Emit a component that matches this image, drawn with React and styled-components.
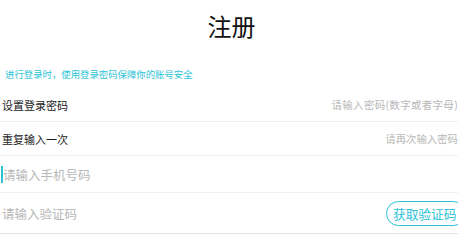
import React from 'react';
import styled, { createGlobalStyle } from 'styled-components';

const GlobalStyle = createGlobalStyle`
html, body {
margin: 0;
padding: 0;
overflow: hidden;
background: #ffffff;
}

body {
font-family: "Noto Sans CJK SC", "Noto Sans", sans-serif;
}
`

const cyan = '#2cc3d6';

const Page = styled.div`
width: 458px;
display: flex;
flex-direction: column;
`

const Title = styled.h1`
margin: 0;
height: 52px;
line-height: 52px;
padding-left: 5px;
text-align: center;
font-size: 24px;
font-weight: 400;
color: #111;
`

const Hint = styled.p`
margin: 15px 0 7px 5px;
line-height: 14px;
font-size: 9.4px;
color: ${cyan};
`

const Row = styled.div`
box-sizing: border-box;
height: ${(p) => p.height}px;
display: flex;
align-items: center;
padding-left: 2px;
border-bottom: 1px solid ${(p) => (p.last ? '#e4e4e4' : '#f1f1f1')};
`

const Label = styled.span`
flex-shrink: 0;
font-size: 11px;
color: #1a1a1a;
`

const Field = styled.input`
flex: 1;
min-width: 0;
border: none;
outline: none;
padding: 0;
background: transparent;
font-family: inherit;
font-size: ${(p) => p.size || 12.5}px;
letter-spacing: ${(p) => p.spacing || 0}px;
text-align: ${(p) => (p.right ? 'right' : 'left')};
color: #333;

&::placeholder {
color: #b8b8b8;
}
`

const Caret = styled.span`
flex-shrink: 0;
width: 2px;
height: 17px;
margin-left: -1px;
background: ${cyan};
`

const CodeButton = styled.button`
flex-shrink: 0;
box-sizing: border-box;
width: 80px;
height: 25px;
margin-right: -8px;
padding: 0 0 0 6px;
text-align: left;
border: 1px solid ${cyan};
border-radius: 13px;
background: #fff;
font-family: inherit;
font-size: 12.7px;
color: ${cyan};
`

export default function App() {
	return (
		<Page>
			<GlobalStyle />
			<Title>注册</Title>
			<Hint>进行登录时，使用登录密码保障你的账号安全</Hint>

			<Row height={34}>
				<Label>设置登录密码</Label>
				<Field right size={10.5} spacing={0.3} type="password" placeholder="请输入密码(数字或者字母)" />
			</Row>

			<Row height={34}>
				<Label>重复输入一次</Label>
				<Field right size={10.4} type="password" placeholder="请再次输入密码" />
			</Row>

			<Row height={37}>
				<Caret />
				<Field placeholder="请输入手机号码" />
			</Row>

			<Row height={41} last>
				<Field placeholder="请输入验证码" />
				<CodeButton>获取验证码</CodeButton>
			</Row>
		</Page>
	);
}
